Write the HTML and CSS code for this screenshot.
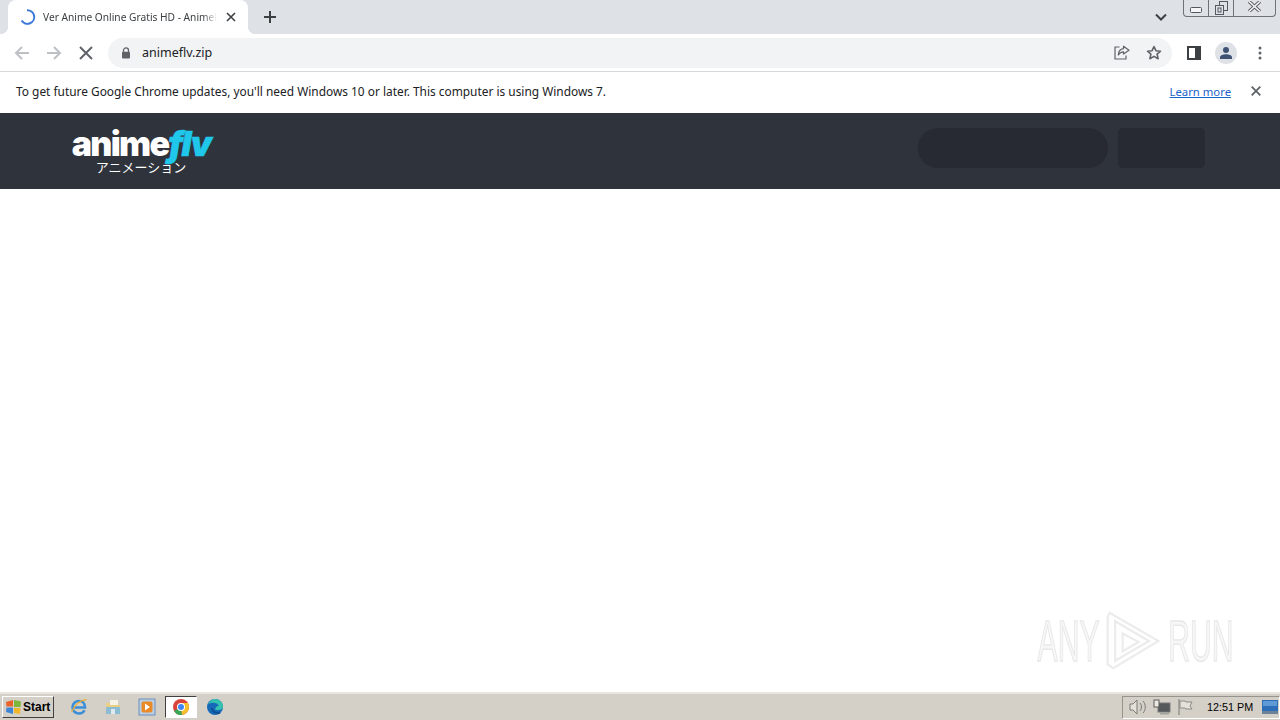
FILE: index.html
```html
<!DOCTYPE html>
<html lang="en">
<head>
<meta charset="utf-8">
<title>Ver Anime Online Gratis HD - AnimeFLV</title>
<link rel="stylesheet" href="styles.css">
</head>
<body>
<div class="screen">
  <div class="tabstrip">
    <div class="tab">
      <svg class="spinner" width="16" height="16" viewBox="0 0 16 16"><path d="M7 1.200A6.800 6.800 0 1 1 1.600 11.500" fill="none" stroke="#3b78d8" stroke-width="2"/></svg>
      <span class="tab-title">Ver Anime Online Gratis HD - AnimeFLV</span>
      <svg class="tab-close" width="10" height="10" viewBox="0 0 10 10"><path d="M1 1l8 8M9 1l-8 8" stroke="#3c4043" stroke-width="1.600"/></svg>
    </div>
    <svg class="newtab" width="12" height="12" viewBox="0 0 12 12"><path d="M6 0v12M0 6h12" stroke="#3c4043" stroke-width="2"/></svg>
    <div class="strip-spacer"></div>
    <svg class="chev" width="12" height="8" viewBox="0 0 12 8"><path d="M1 1.500l5 5 5-5" fill="none" stroke="#3c4043" stroke-width="2"/></svg>
    <div class="wincontrols">
      <div class="wbtn wbtn-min"><svg width="12" height="6" viewBox="0 0 12 6"><rect x=".5" y=".5" width="11" height="5" rx="1" fill="#f4f5f7" stroke="#55585e"/></svg></div>
      <div class="wbtn wbtn-max"><svg width="13" height="14" viewBox="0 0 13 14"><rect x="4.500" y=".5" width="8" height="9" fill="none" stroke="#55585e"/><rect x=".5" y="4.500" width="8" height="9" fill="#dee1e6" stroke="#55585e"/><rect x="3" y="7" width="3" height="4" fill="none" stroke="#55585e"/></svg></div>
      <div class="wbtn wbtn-close"><svg width="15" height="11" viewBox="0 0 15 11"><path d="M2 .5l11 10M13 .5l-11 10" stroke="#55585e" stroke-width="3.400"/><path d="M2 .5l11 10M13 .5l-11 10" fill="none" stroke="#f4f5f7" stroke-width="1.600"/></svg></div>
    </div>
  </div>

  <div class="toolbar">
    <svg class="navicon" width="16" height="16" viewBox="0 0 16 16"><path d="M15 8H2M8 2L2 8l6 6" fill="none" stroke="#bdc1c6" stroke-width="2"/></svg>
    <svg class="navicon" width="16" height="16" viewBox="0 0 16 16"><path d="M1 8h13M8 2l6 6-6 6" fill="none" stroke="#bdc1c6" stroke-width="2"/></svg>
    <svg class="navicon" width="16" height="16" viewBox="0 0 16 16"><path d="M2 2l12 12M14 2L2 14" stroke="#5f6368" stroke-width="2"/></svg>
    <div class="omnibox">
      <svg class="lock" width="10" height="12" viewBox="0 0 10 12"><path d="M2.500 5V3.400a2.500 2.500 0 0 1 5 0V5" fill="none" stroke="#5f6368" stroke-width="1.300"/><rect x="1" y="4.700" width="8" height="6.800" rx="1" fill="#5f6368"/></svg>
      <span class="url">animeflv.zip</span>
      <div class="strip-spacer"></div>
      <svg class="omni-share" width="16" height="15" viewBox="0 0 16 15"><path d="M5.500 2H1v12h11v-3.500" fill="none" stroke="#5f6368" stroke-width="1.200"/><path d="M9.500 1.200L15 5.200 9.500 9V6.800C7 6.800 5.400 8 4.300 10c.2-3.600 2.300-6.100 5.200-6.400z" fill="none" stroke="#5f6368" stroke-width="1.200" stroke-linejoin="round"/></svg>
      <svg class="omni-star" width="16" height="15" viewBox="0 0 16 15"><path d="M8 1.500l1.900 4.200 4.600.5-3.400 3 1 4.500L8 11.400l-4.100 2.300 1-4.500-3.400-3 4.600-.5z" fill="none" stroke="#5f6368" stroke-width="1.600" stroke-linejoin="round"/></svg>
    </div>
    <svg class="sidepanel" width="14" height="14" viewBox="0 0 14 14"><path fill-rule="evenodd" d="M0 0h14v14H0zM2 2v10h6V2z" fill="#3c4043"/><rect x="8" y="2" width="4" height="10" fill="#3c4043"/></svg>
    <div class="avatar"><svg width="14" height="14" viewBox="0 0 14 14"><circle cx="7" cy="4" r="3" fill="#3f5274"/><path d="M1 13v-1.500C1 9.500 4 8.300 7 8.300s6 1.200 6 3.200V13z" fill="#3f5274"/></svg></div>
    <svg class="menu" width="4" height="14" viewBox="0 0 4 14"><circle cx="2" cy="2" r="1.500" fill="#5f6368"/><circle cx="2" cy="7" r="1.500" fill="#5f6368"/><circle cx="2" cy="12" r="1.500" fill="#5f6368"/></svg>
  </div>

  <div class="infobar">
    <span class="info-text">To get future Google Chrome updates, you'll need Windows 10 or later. This computer is using Windows 7.</span>
    <a class="learn" href="#">Learn more</a>
    <svg class="info-close" width="10" height="10" viewBox="0 0 10 10"><path d="M.7.700l8.600 8.600M9.300.700L.7 9.300" stroke="#5f6368" stroke-width="1.800"/></svg>
  </div>

  <header class="site-header">
    <div class="logo">
      <div class="logo-word"><span class="logo-anime">anime</span><span class="logo-flv">flv</span></div>
      <div class="logo-sub">アニメーション</div>
    </div>
    <div class="strip-spacer"></div>
    <div class="ph ph-search"></div>
    <div class="ph ph-btn"></div>
  </header>

  <main class="content">
    <div class="watermark">
      <span class="wm-text">ANY</span>
      <svg class="wm-logo" width="58" height="62" viewBox="0 0 60 66"><g fill="none" stroke="#ececec" stroke-width="2.400"><path d="M5 3l52 30L9 62 3 58V8z"/><path d="M11 12l36 21-36 21z"/><path d="M19 25l17 9-17 10z"/></g></svg>
      <span class="wm-text">RUN</span>
    </div>
  </main>

  <footer class="taskbar">
    <div class="start">
      <svg width="17" height="16" viewBox="0 0 17 16"><path d="M1 3l7-2v6.500H1.500z" fill="#e8622a"/><path d="M9 1l7 1.500-.5 5.500H9z" fill="#7eb53c"/><path d="M1.500 8.500H8V15l-7-2z" fill="#3d85d6"/><path d="M9 9h6.500l-.5 6-6-1z" fill="#f1b72c"/></svg>
      <span>Start</span>
    </div>
    <div class="quick">
      <div class="tb-icon"><svg width="18" height="18" viewBox="0 0 18 18"><path d="M3 9.500h12c0-4-2.500-6.500-6-6.500s-6.500 2.700-6.500 6.300 2.700 6.200 6.500 6.200c2.500 0 4.500-1.200 5.500-3.300" fill="none" stroke="#3d8fd8" stroke-width="2.600"/><path d="M1.500 14C5 6.500 11 2 16.500 1.500" fill="none" stroke="#e9b03a" stroke-width="1.300"/></svg></div>
      <div class="tb-icon"><svg width="18" height="18" viewBox="0 0 18 18"><path d="M2 5h5l1 2h8v9H2z" fill="#e8cf83"/><path d="M6 2h8v5H6z" fill="#f6f3e4"/><path d="M2 9h14v7H2z" fill="#8cbcd1"/><rect x="7" y="11" width="4" height="5" fill="#dfe9ee"/></svg></div>
      <div class="tb-icon"><svg width="18" height="18" viewBox="0 0 18 18"><rect x="1" y="1" width="16" height="16" fill="#b9cfe6" stroke="#6d8fb8"/><rect x="3.500" y="3.500" width="11" height="11" rx="2" fill="#ea8a24"/><path d="M7 5.500l5 3.500-5 3.500z" fill="#fff"/></svg></div>
      <div class="tb-icon tb-active"><svg width="16" height="16" viewBox="0 0 16 16"><circle cx="8" cy="8" r="8" fill="#d9433a"/><path d="M8 8L1 12a8 8 0 0 0 8 4z" fill="#3aa757"/><path d="M8 8l1 8a8 8 0 0 0 7-8 8 8 0 0 0-1-4H8z" fill="#f5c02c"/><circle cx="8" cy="8" r="4" fill="#fff"/><circle cx="8" cy="8" r="3" fill="#4285f4"/></svg></div>
      <div class="tb-icon"><svg width="16" height="16" viewBox="0 0 16 16"><circle cx="8" cy="8" r="8" fill="#1668b8"/><path d="M1 5.500C2.500 2 5 0 8 0c4.500 0 8 3.300 8 7.500 0 2.500-2 3.500-4.500 3.500H8.500c-.6-2.300 1-4 3.300-4C10.500 4 5 2.500 1 5.500z" fill="#35c1b0"/><path d="M5 9c0 3.500 3.500 6 8 4.700" fill="none" stroke="#0f4f94" stroke-width="2"/></svg></div>
    </div>
    <div class="strip-spacer"></div>
    <div class="tray">
      <svg width="18" height="16" viewBox="0 0 18 16"><path d="M1 5h3l4-4v14l-4-4H1z" fill="#e4e1da" stroke="#7b7b75"/><path d="M11 4c2 2 2 6 0 8M14 2c3 3 3 9 0 12" fill="none" stroke="#7b7b75"/></svg>
      <svg width="18" height="16" viewBox="0 0 18 16"><rect x="5" y="4" width="12" height="9" fill="#55595c" stroke="#77797a"/><rect x="1" y="1" width="5" height="7" fill="#ece9e2" stroke="#5c5c58"/><path d="M7 14h9v1.500H7z" fill="#a3a3a0"/></svg>
      <svg width="16" height="16" viewBox="0 0 16 16"><path d="M2 0v16" stroke="#77776f"/><path d="M3 2h5l1 1h6l-2 4 2 3H9L8 9H3z" fill="#e4e1da" stroke="#8b8b83"/></svg>
      <span class="clock">12:51 PM</span>
      <svg class="desk" width="16" height="14" viewBox="0 0 16 14"><rect width="16" height="11" fill="#2c6fb8"/><rect y="11" width="16" height="3" fill="#6d8198"/><rect x="1" y="1" width="14" height="5" fill="#5d9ad6"/></svg>
    </div>
  </footer>
</div>
</body>
</html>
```
FILE: styles.css
```css
* { box-sizing: border-box; }
html, body { margin: 0; height: 100%; overflow: hidden; }
body { font-family: "Noto Sans", "Liberation Sans", sans-serif; background: #fff; }
svg { display: block; flex: none; }
.screen { width: 1280px; height: 720px; display: flex; flex-direction: column; }
.strip-spacer { flex: 1; }

.tabstrip { height: 34px; background: #dee1e6; display: flex; align-items: center; padding-left: 8px; flex: none; }
.tab { position: relative; width: 240px; height: 34px; background: #fff; border-radius: 8px 8px 0 0; display: flex; align-items: center; padding: 0 12px; }
.tab::before, .tab::after { content: ""; position: absolute; bottom: 0; width: 8px; height: 8px; }
.tab::before { left: -8px; background: radial-gradient(circle at 0 0, transparent 8px, #fff 8.500px); }
.tab::after { right: -8px; background: radial-gradient(circle at 100% 0, transparent 8px, #fff 8.500px); }
.spinner { margin-right: 7px; }
.tab-title { width: 174px; padding-bottom: 1px; white-space: nowrap; overflow: hidden; font-size: 10.200px; color: #3c4043; -webkit-mask-image: linear-gradient(90deg, #000 92%, transparent); mask-image: linear-gradient(90deg, #000 92%, transparent); }
.tab-close { margin-left: 9px; }
.newtab { margin-left: 16px; }
.chev { margin-right: 16px; }
.wincontrols { align-self: flex-start; display: flex; height: 17px; width: 93px; margin-right: 4px; border: 1px solid #6f7277; border-top: 0; border-radius: 0 0 4px 4px; }
.wbtn { display: flex; align-items: center; justify-content: center; height: 100%; border-right: 1px solid #6f7277; }
.wbtn:last-child { border-right: 0; }
.wbtn-min { width: 25px; padding-top: 3px; }
.wbtn-max { width: 25px; }
.wbtn-close { flex: 1; padding-bottom: 3px; }

.toolbar { height: 38px; background: #fff; border-bottom: 1px solid #d5d7da; display: flex; align-items: center; padding-left: 14px; flex: none; }
.navicon + .navicon { margin-left: 16px; }
.omnibox { width: 1064px; height: 30px; margin-left: 14px; background: #f1f3f4; border-radius: 15px; display: flex; align-items: center; padding: 0 10px 0 13px; }
.lock { margin-right: 11px; }
.url { font-size: 12.500px; color: #202124; }
.omni-share { margin-right: 16px; }
.sidepanel { margin-left: 15px; }
.avatar { width: 22px; height: 22px; border-radius: 50%; background: #dee1e6; margin-left: 14px; display: flex; align-items: center; justify-content: center; }
.menu { margin-left: 21px; }

.infobar { height: 41px; background: #fff; display: flex; align-items: center; padding: 0 19px 3px 16px; flex: none; }
.info-text { font-size: 11.900px; color: #202124; flex: 1; white-space: nowrap; }
.learn { font-size: 11.300px; color: #1a63c9; text-decoration: underline; margin-right: 20px; }

.site-header { height: 76px; background: #2f333c; display: flex; align-items: center; padding: 0 75px 6px 70px; flex: none; }
.logo { width: 142px; display: flex; flex-direction: column; align-items: center; margin-top: 6px; }
.logo-word { height: 32px; font-family: Inter, "Liberation Sans", sans-serif; font-size: 34px; font-weight: 900; line-height: 32px; letter-spacing: -1.700px; white-space: nowrap; }
.logo-anime { color: #fff; }
.logo-flv { color: #1fc7ea; font-style: italic; -webkit-text-stroke: .6px #1fc7ea; }
.logo-sub { font-family: "Noto Sans CJK JP", sans-serif; font-size: 13px; line-height: 14px; color: #fff; }
.ph { height: 40px; background: #272a32; }
.ph-search { width: 190px; border-radius: 20px; }
.ph-btn { width: 87px; border-radius: 5px; margin-left: 10px; }

.content { flex: 1; background: #fff; display: flex; justify-content: flex-end; align-items: flex-end; padding: 0 45px 20px 0; }
.watermark { display: flex; align-items: center; gap: 5px; }
.wm-text { font-family: "Liberation Sans", sans-serif; font-size: 58px; line-height: 62px; color: #f7f7f7; -webkit-text-stroke: 1.500px #e8e8e8; transform: scaleX(.52); margin: 0 -29px; white-space: nowrap; }

.taskbar { height: 28px; background: #d4d0c8; border-top: 2px solid #e9e6df; display: flex; align-items: center; padding-left: 2px; flex: none; }
.start { width: 52px; height: 22px; display: flex; align-items: center; gap: 1px; padding-left: 2px; border: 1px solid; border-color: #fff #404040 #404040 #fff; font-family: "Liberation Sans", sans-serif; font-size: 12px; font-weight: 700; color: #000; }
.quick { display: flex; align-items: center; margin-left: 8px; }
.tb-icon { width: 34px; height: 26px; display: flex; align-items: center; justify-content: center; }
.tb-active { width: 32px; height: 22px; margin: 0 1px; background: #fff; border: 1px solid; border-color: #404040 #fff #fff #404040; }
.tray { height: 23px; width: 158px; display: flex; align-items: center; gap: 6px; padding-left: 6px; border: 1px solid; border-color: #97948c #fff #fff #97948c; }
.clock { font-family: "Liberation Sans", sans-serif; font-size: 10.800px; color: #000; margin-left: 8px; white-space: nowrap; }
.desk { margin-left: 3px; }
```
